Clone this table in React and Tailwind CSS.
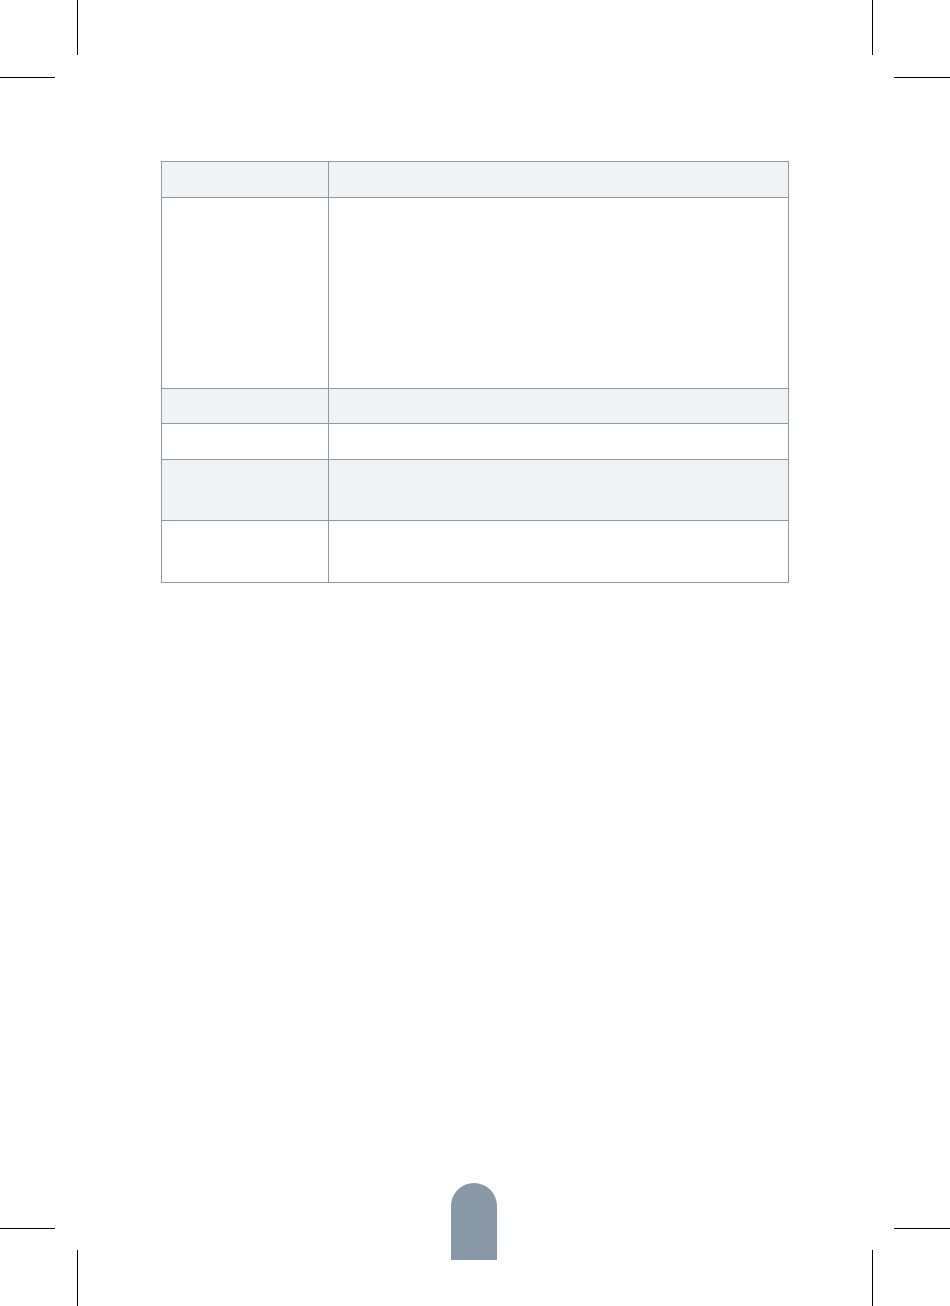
import React from 'react';

const LINE = 'bg-black';
const BORDER = 'border-[#8a9aa8]';

// row heights include the 1px bottom rule (border-box)
const rows = [
    { h: 'h-[36px]', shaded: true },
    { h: 'h-[191px]', shaded: false },
    { h: 'h-[35px]', shaded: true },
    { h: 'h-[36px]', shaded: false },
    { h: 'h-[61px]', shaded: true },
    { h: 'h-[61px]', shaded: false },
];

const App = () => {
    return (
        <div className="w-[950px] h-[1306px] bg-white flex flex-col overflow-hidden" style={{ fontFamily: '"Open Sans", sans-serif' }}>
            {/* Top crop marks */}
            <div className="flex h-[78px] shrink-0">
                <div className="w-[77px] flex flex-col justify-end">
                    <div className={`w-[55px] h-px ${LINE}`} />
                </div>
                <div className={`w-px h-[55px] ${LINE}`} />
                <div className="flex-1" />
                <div className={`w-px h-[55px] ${LINE}`} />
                <div className="w-[77px] flex flex-col justify-end items-end">
                    <div className={`w-[56px] h-px ${LINE}`} />
                </div>
            </div>

            {/* Table */}
            <div className={`mt-[83px] ml-[161px] w-[628px] border ${BORDER} flex flex-col`}>
                {rows.map((row, i) => (
                    <div
                        key={i}
                        className={`flex ${row.h} ${row.shaded ? 'bg-[#f0f2f4]' : 'bg-white'} ${i < rows.length - 1 ? `border-b ${BORDER}` : ''}`}
                    >
                        <div className={`w-[167px] shrink-0 border-r ${BORDER}`} />
                        <div className="flex-1" />
                    </div>
                ))}
            </div>

            <div className="flex-1" />

            {/* Bottom crop marks + page tab */}
            <div className="flex h-[123px] shrink-0">
                <div className="w-[77px] flex flex-col pt-[45px]">
                    <div className={`w-[55px] h-px ${LINE}`} />
                </div>
                <div className="w-px flex flex-col pt-[67px]">
                    <div className={`flex-1 ${LINE}`} />
                </div>
                <div className="flex-1 flex justify-center pr-[2px]">
                    <div className="w-[46px] h-[77px] rounded-t-full bg-[#8898a6]" />
                </div>
                <div className="w-px flex flex-col pt-[67px]">
                    <div className={`flex-1 ${LINE}`} />
                </div>
                <div className="w-[77px] flex flex-col items-end pt-[45px]">
                    <div className={`w-[56px] h-px ${LINE}`} />
                </div>
            </div>
        </div>
    );
};

export default App;
